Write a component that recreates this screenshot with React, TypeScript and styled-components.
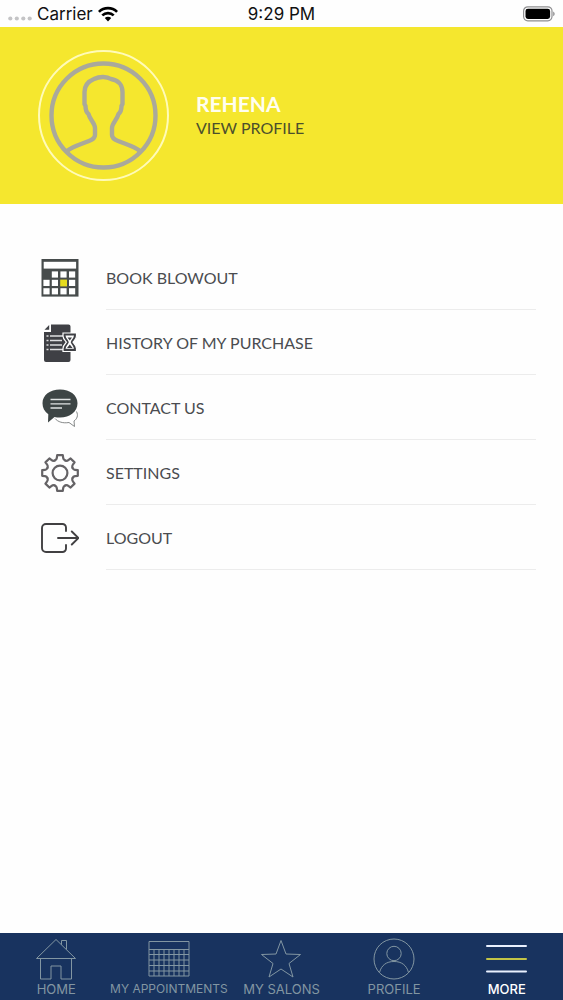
import React, { useState } from 'react';
import styled, { createGlobalStyle } from 'styled-components';

const menuItems = [
  { label: 'BOOK BLOWOUT', href: '#book', icon: <BookIcon /> },
  { label: 'HISTORY OF MY PURCHASE', href: '#history', icon: <HistoryIcon /> },
  { label: 'CONTACT US', href: '#contact', icon: <ContactIcon /> },
  { label: 'SETTINGS', href: '#settings', icon: <SettingsIcon /> },
  { label: 'LOGOUT', href: '#logout', icon: <LogoutIcon /> },
];

const tabs = [
  { label: 'HOME', icon: <HomeIcon /> },
  { label: 'MY APPOINTMENTS', icon: <AppointmentsIcon />, compact: true },
  { label: 'MY SALONS', icon: <StarIcon /> },
  { label: 'PROFILE', icon: <ProfileIcon /> },
  { label: 'MORE', icon: <MoreIcon /> },
];

export default function App() {
  const [activeTab, setActiveTab] = useState('MORE');

  return (
    <>
      <GlobalStyle />
      <Screen>
        <StatusBar>
          <StatusSide>
            <SignalDots />
            <span>Carrier</span>
            <WifiIcon />
          </StatusSide>
          <span>9:29 PM</span>
          <StatusSide $end>
            <BatteryIcon />
          </StatusSide>
        </StatusBar>

        <ProfileHeader>
          <Avatar>
            <PersonIcon />
          </Avatar>
          <ProfileText>
            <UserName>REHENA</UserName>
            <ProfileLink href="#profile">VIEW PROFILE</ProfileLink>
          </ProfileText>
        </ProfileHeader>

        <Menu>
          {menuItems.map((item) => (
            <MenuItem key={item.label}>
              <MenuLink href={item.href}>
                {item.icon}
                <MenuLabel>{item.label}</MenuLabel>
              </MenuLink>
            </MenuItem>
          ))}
        </Menu>

        <TabBar>
          {tabs.map((tab) => (
            <TabButton
              key={tab.label}
              type="button"
              $active={tab.label === activeTab}
              $compact={tab.compact}
              onClick={() => setActiveTab(tab.label)}
            >
              {tab.icon}
              <span>{tab.label}</span>
            </TabButton>
          ))}
        </TabBar>
      </Screen>
    </>
  );
}

// Status bar

function SignalDots() {
  return (
    <svg width="24" height="18" viewBox="0 0 24 18" fill="#c4c4c6" aria-hidden="true">
      <circle cx="2.3" cy="13.5" r="2.1" />
      <circle cx="8.8" cy="13.5" r="2.1" />
      <circle cx="15.3" cy="13.5" r="2.1" />
      <circle cx="21.7" cy="13.5" r="2.1" />
    </svg>
  );
}

function WifiIcon() {
  return (
    <svg width="20" height="16" viewBox="0 0 20 16" fill="none" stroke="#000" strokeWidth="2.7" aria-hidden="true">
      <path d="M0.9 5.9a13 13 0 0 1 18.2 0" />
      <path d="M4.3 9.4a8.2 8.2 0 0 1 11.4 0" />
      <path d="M6.8 12a4.6 4.6 0 0 1 6.4 0L10 15.4z" fill="#000" stroke="none" />
    </svg>
  );
}

function BatteryIcon() {
  return (
    <svg width="32" height="16" viewBox="0 0 32 16" aria-hidden="true">
      <rect x="0.6" y="0.8" width="28.4" height="14" rx="4.2" fill="none" stroke="#8e8e90" strokeWidth="1.2" />
      <rect x="2.5" y="2.7" width="24.6" height="10.2" rx="2.4" fill="#000" />
      <path d="M30.2 5.4c1.9.7 1.9 4.1 0 4.8z" fill="#8e8e90" />
    </svg>
  );
}

// Profile header

function PersonIcon() {
  return (
    <svg width="109" height="109" viewBox="0 0 109 109" fill="none" stroke="#aaa99b" strokeWidth="4.4" strokeLinejoin="round" aria-hidden="true">
      <circle cx="54.5" cy="54.5" r="52" />
      <path d="M18 90C24 85 33 83 40 80C44 78.500 46 77 46 74V67C46 62 41 59 39.500 53C37 51 36.500 48 36.500 45L35.500 43V31C35.500 24 40 20 45 18C51 15 58 15.500 62 18C69 19 73.500 24 73.500 31V43L72.500 45C72.500 48 72 51 69.500 53C68 59 63 62 63 67V74C63 77 65 78.500 69 80C76 83 85 85 91 90" />
    </svg>
  );
}

// Menu icons

function BookIcon() {
  const cells = [
    [10.8, 12.4], [19.4, 12.4], [28, 12.4],
    [2.4, 20.8], [10.8, 20.8], [28, 20.8],
    [2.4, 29.2], [10.8, 29.2], [19.4, 29.2], [28, 29.2],
  ];
  return (
    <svg width="38" height="38" viewBox="0 0 38 38" aria-hidden="true">
      <rect x="0.5" y="0" width="37" height="37.6" fill="#474c4c" />
      <rect x="2.7" y="2.8" width="32.4" height="6.8" fill="#fff" />
      {cells.map(([x, y]) => (
        <rect key={`${x}-${y}`} x={x} y={y} width="6.2" height="6.2" fill="#fff" />
      ))}
      <rect x="19.2" y="20.6" width="6.8" height="6.8" fill="#e6dc1e" />
    </svg>
  );
}

function HistoryIcon() {
  return (
    <svg width="38" height="38" viewBox="0 0 38 38" aria-hidden="true">
      <path d="M10 .5h17.5a2 2 0 0 1 2 2V36a2 2 0 0 1-2 2H5a2 2 0 0 1-2-2V8h7z" fill="#3f4045" />
      <path d="M3.5 5.8 8.2 1v4.8z" fill="#3f4045" />
      <path d="M5.5 12h2M5.5 16.5h2M5.5 21h2M5.500 25.500h2M9 12h13M9 16.500h12M9 21h12M9 25.500h13" stroke="#dedee0" strokeWidth="1.7" />
      <path d="M22 9h13.500v3c0 3-2 4.500-3.500 6.200 1.500 1.700 3.500 3.300 3.500 6.300v3H22v-3c0-3 2-4.600 3.500-6.300C24 16.500 22 15 22 12z" fill="#3f4045" stroke="#fff" strokeWidth="1.2" />
      <path d="M24.500 11.500h8.500c-.3 3-2.700 4.300-3.300 6.700.6 2.400 3 3.600 3.300 6.600h-8.500c.3-3 2.700-4.200 3.300-6.600-.6-2.400-3-3.700-3.300-6.700z" fill="#fff" />
      <path d="M26.500 13.500h4.500l-2.200 3zM26 24l2.800-3.500 2.800 3.500z" fill="#3f4045" />
    </svg>
  );
}

function ContactIcon() {
  return (
    <svg width="38" height="38" viewBox="0 0 38 38" aria-hidden="true">
      <path d="M35.500 22.500c2 4 .5 7.500-2.500 9.500l.5 5.500-5.500-4c-6 1-11-.5-14-4" fill="#fff" stroke="#777b7b" strokeWidth="0.9" />
      <path d="M19 .5c10 0 17.500 5.500 17.500 13.800S29 28.500 19 28.500c-2 0-3.800-.2-5.500-.6L7 33.500l.3-8.300C3.500 22.700 1.500 18.800 1.500 14.300 1.500 6 9 .5 19 .5z" fill="#3d4545" />
      <path d="M9.500 10.500h20M9.500 14.800h20M9.500 19h11.500" stroke="#dfe3e3" strokeWidth="1.3" />
    </svg>
  );
}

// One tooth repeated eight times around the hub
function SettingsIcon() {
  return (
    <svg width="38" height="38" viewBox="-19 -19 38 38" fill="none" stroke="#656366" strokeWidth="2.2" strokeLinejoin="round" strokeLinecap="round" aria-hidden="true">
      {[0, 45, 90, 135, 180, 225, 270, 315].map((angle) => (
        <path
          key={angle}
          d="M-5.2 -12.5C-3.900 -13 -3.400 -13.600 -3.200 -15L-2.800 -17.800H2.800L3.200 -15C3.400 -13.600 3.900 -13 5.200 -12.500"
          transform={`rotate(${angle})`}
        />
      ))}
      <circle r="7.4" />
    </svg>
  );
}

function LogoutIcon() {
  return (
    <svg width="38" height="38" viewBox="0 0 38 38" fill="none" stroke="#414042" strokeWidth="1.9" strokeLinecap="round" strokeLinejoin="round" aria-hidden="true">
      <path d="M25 12V8.500a3.500 3.500 0 0 0-3.500-3.500H5A4 4 0 0 0 1 9v20a4 4 0 0 0 4 4h16.500a3.500 3.500 0 0 0 3.500-3.500v-3.500" />
      <path d="M17 19h20.500M30.800 12.500l6.700 6.500-6.700 6.500" />
    </svg>
  );
}

// Tab bar icons

function HomeIcon() {
  return (
    <svg width="42" height="42" viewBox="0 0 42 42" fill="none" stroke="currentColor" strokeWidth="1" aria-hidden="true">
      <path d="M1.500 20.500 21 1.500l19.500 19zM5.500 20.500V41H16V28h10v13h10.500V20.500M26.500 6.800V2.500h5v9" />
    </svg>
  );
}

function AppointmentsIcon() {
  return (
    <svg width="42" height="42" viewBox="0 0 42 42" fill="none" stroke="currentColor" strokeWidth="1" aria-hidden="true">
      <path d="M1 3.500h40V38H1zM1 11.500h40M1 16.500h40M1 22h40M1 27.500h40M1 33h40" />
      <path d="M6 11.500V38M11 11.500V38M16 11.500V38M21 11.500V38M26 11.500V38M31 11.500V38M36 11.500V38" />
    </svg>
  );
}

function StarIcon() {
  return (
    <svg width="42" height="42" viewBox="0 0 42 42" fill="none" stroke="currentColor" strokeWidth="1" aria-hidden="true">
      <path d="M21 2.500l5 13.500 14.500.5L29 25.500l4 13.500-12-8-12 8 4-13.500L1.500 16.500 16 16z" />
    </svg>
  );
}

function ProfileIcon() {
  return (
    <svg width="42" height="42" viewBox="0 0 42 42" fill="none" stroke="currentColor" strokeWidth="1" aria-hidden="true">
      <circle cx="21" cy="21" r="20" />
      <circle cx="21" cy="15.5" r="7.2" />
      <path d="M6.500 34.500C8.500 27 13.500 23.500 21 23.500S33.500 27 35.500 34.500" />
    </svg>
  );
}

function MoreIcon() {
  return (
    <svg width="42" height="42" viewBox="0 0 42 42" fill="none" strokeWidth="2" strokeLinecap="round" aria-hidden="true">
      <path d="M1 8h39M1 33.500h39" stroke="#e9f1ff" />
      <path d="M1 21h39" stroke="#c3c446" />
    </svg>
  );
}

const GlobalStyle = createGlobalStyle`
  * {
    box-sizing: border-box;
  }

  body {
    margin: 0;
    background-color: #fefefe;
    font-family: Lato, sans-serif;
  }
`;

const Screen = styled.div`
  min-height: 100vh;
  display: flex;
  flex-direction: column;
`;

const StatusBar = styled.div`
  display: flex;
  align-items: center;
  height: 27px;
  padding: 0 8px;
  color: #111;
  font-family: Inter, sans-serif;
  font-size: 17px;
`;

const StatusSide = styled.div<{ $end?: boolean }>`
  flex: 1;
  display: flex;
  align-items: center;
  gap: 5px;
  justify-content: ${props => (props.$end ? 'flex-end' : 'flex-start')};
`;

const ProfileHeader = styled.header`
  display: flex;
  align-items: center;
  gap: 27px;
  height: 177px;
  padding: 0 38px;
  background-color: #f5e72e;
`;

const Avatar = styled.div`
  display: flex;
  align-items: center;
  justify-content: center;
  width: 131px;
  height: 131px;
  border: 2px solid #fffbb8;
  border-radius: 50%;
`;

const ProfileText = styled.div`
  display: flex;
  flex-direction: column;
`;

const UserName = styled.h1`
  margin: 0;
  color: #fffef0;
  font-size: 21px;
  font-weight: 700;
  line-height: 24px;
`;

const ProfileLink = styled.a`
  color: #4c4f2c;
  font-size: 16px;
  line-height: 24px;
  text-decoration: none;
`;

const Menu = styled.ul`
  flex: 1;
  margin: 0;
  padding: 41px 27px 0 41px;
  list-style: none;
`;

const MenuItem = styled.li`
  height: 65px;
`;

const MenuLink = styled.a`
  display: flex;
  align-items: center;
  gap: 27px;
  height: 100%;
  color: #4a4c50;
  text-decoration: none;

  svg {
    flex-shrink: 0;
  }
`;

const MenuLabel = styled.span`
  flex: 1;
  display: flex;
  align-items: center;
  height: 100%;
  border-bottom: 1px solid #ececec;
  font-size: 16px;
`;

const TabBar = styled.nav`
  display: grid;
  grid-template-columns: repeat(5, 1fr);
  height: 67px;
  background-color: #18335f;
`;

const TabButton = styled.button<{ $active: boolean; $compact?: boolean }>`
  display: flex;
  flex-direction: column;
  align-items: center;
  min-width: 0;
  padding: 5px 0 0;
  border: none;
  background: none;
  color: ${props => (props.$active ? '#fff' : '#8296a2')};
  font-family: Inter, sans-serif;
  font-size: ${props => (props.$compact ? '12px' : '13px')};
  font-weight: ${props => (props.$active ? 500 : 400)};
  line-height: 18px;
  white-space: nowrap;
  cursor: pointer;
`;
